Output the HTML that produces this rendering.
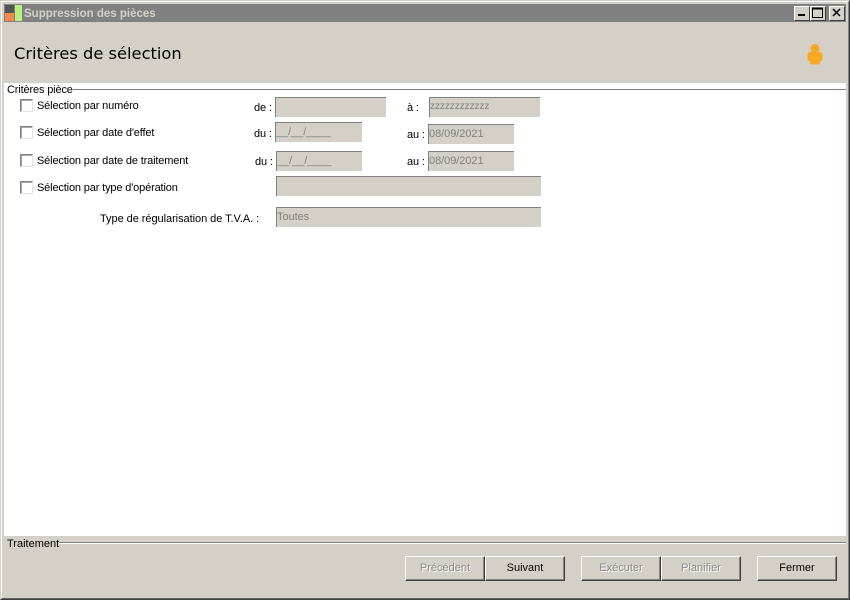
<!DOCTYPE html>
<html lang="fr"><head><meta charset="utf-8"><title>Suppression des pièces</title>
<style>
html,body{margin:0;padding:0}
body{width:850px;height:600px;position:relative;overflow:hidden;background:#d4d0c8;font-family:"Liberation Sans",sans-serif;font-size:11px;color:#000}
div,span.t{position:absolute}
.t{white-space:nowrap;line-height:13px;letter-spacing:-.15px}
.f{background:#d4d0c8;border-top:1px solid #808080;border-left:1px solid #808080;box-sizing:border-box;color:#808080;line-height:14px;white-space:nowrap;padding-top:2px;overflow:hidden;letter-spacing:-.05px}
.c{width:13px;height:13px;box-sizing:border-box;background:#fff;border-top:1px solid #808080;border-left:1px solid #808080;border-right:1px solid #e4e2dc;border-bottom:1px solid #e4e2dc;box-shadow:inset 1px 1px 0 #a8a8a8;left:20px}
.b{height:25px;width:80px;top:556px;box-sizing:border-box;background:#d4d0c8;border-top:1px solid #fff;border-left:1px solid #fff;border-right:1px solid #404040;border-bottom:1px solid #404040;box-shadow:inset -1px -1px 0 #808080;text-align:center;line-height:23px}
.d{color:#8a8a8a;text-shadow:1px 1px 0 #fff}
.w{top:6px;width:14px;height:13px;background:#d4d0c8;border-top:1px solid #fff;border-left:1px solid #fff;border-right:1px solid #404040;border-bottom:1px solid #404040;box-sizing:content-box}
</style></head><body>
<div style="left:0;top:0;width:850px;height:600px;box-sizing:border-box;border-top:1px solid #d4d0c8;border-left:1px solid #d4d0c8;border-right:1px solid #404040;border-bottom:1px solid #404040"></div>
<div style="left:1px;top:1px;width:848px;height:598px;border:1px solid #fff;border-right-color:#808080;border-bottom-color:#606060;box-sizing:border-box"></div>
<div style="left:4px;top:4px;width:842px;height:18px;background:#808080"></div>
<div style="left:5px;top:5px;width:9px;height:16px;background:#555"></div>
<div style="left:5px;top:13px;width:9px;height:8px;background:#f08a50"></div>
<div style="left:15px;top:5px;width:7px;height:16px;background:#b8f080"></div>
<span class="t" style="left:24px;top:8px;font-size:11.500px;font-weight:bold;color:#d4d0c8;letter-spacing:0">Suppression des pièces</span>
<div class="w" style="left:794px"><svg style="position:absolute;left:0;top:0" width="14" height="13"><rect x="3" y="7" width="7" height="2"/></svg></div>
<div class="w" style="left:810px"><svg style="position:absolute;left:0;top:0" width="14" height="13"><path d="M1.500 1.500h10v9h-10z" fill="none" stroke="#000"/><path d="M1 1.500h11" stroke="#000" stroke-width="2"/></svg></div>
<div class="w" style="left:829px"><svg style="position:absolute;left:0;top:0" width="14" height="13"><path d="M3 2l7 7M10 2l-7 7" stroke="#000" stroke-width="1.500" fill="none"/></svg></div>
<span class="t" style="left:14px;top:44px;font-family:'DejaVu Sans',sans-serif;font-size:16.300px;line-height:19px;letter-spacing:0">Critères de sélection</span>
<svg style="position:absolute;left:806px;top:43px" width="18" height="23"><g fill="#f9a825"><circle cx="9" cy="5.500" r="4.500"/><rect x="1.500" y="9" width="15" height="9.500" rx="3"/><rect x="4" y="12" width="10" height="9.500" rx="1"/></g></svg>
<div style="left:4px;top:83px;width:842px;height:453px;background:#fff"></div>
<div style="left:72px;top:89px;width:774px;height:1px;background:#808080"></div>
<span class="t" style="left:7px;top:84px;background:#fff">Critères pièce</span>
<div class="c" style="top:99px"></div><span class="t" style="left:37px;top:100px">Sélection par numéro</span>
<div class="c" style="top:126px"></div><span class="t" style="left:37px;top:127px">Sélection par date d'effet</span>
<div class="c" style="top:154px"></div><span class="t" style="left:37px;top:155px">Sélection par date de traitement</span>
<div class="c" style="top:181px"></div><span class="t" style="left:37px;top:182px">Sélection par type d'opération</span>
<span class="t" style="left:100px;top:213px;letter-spacing:-.05px">Type de régularisation de T.V.A. :</span>
<span class="t" style="left:254px;top:102px">de :</span>
<span class="t" style="left:254px;top:128px">du :</span>
<span class="t" style="left:255px;top:156px">du :</span>
<span class="t" style="left:407px;top:102px">à :</span>
<span class="t" style="left:407px;top:129px">au :</span>
<span class="t" style="left:407px;top:156px">au :</span>
<div class="f" style="left:275px;top:97px;width:111px;height:20px"></div>
<div class="f" style="left:429px;top:97px;width:111px;height:20px;font-size:10px">zzzzzzzzzzzz</div>
<div class="f" style="left:275px;top:122px;width:87px;height:20px">__/__/____</div>
<div class="f" style="left:428px;top:124px;width:86px;height:20px">08/09/2021</div>
<div class="f" style="left:276px;top:151px;width:86px;height:20px">__/__/____</div>
<div class="f" style="left:428px;top:151px;width:86px;height:20px">08/09/2021</div>
<div class="f" style="left:276px;top:176px;width:265px;height:20px"></div>
<div class="f" style="left:276px;top:207px;width:265px;height:20px">Toutes</div>
<div style="left:59px;top:542px;width:787px;height:1px;background:#808080;border-bottom:1px solid #fff"></div>
<span class="t" style="left:7px;top:538px;background:#d4d0c8;letter-spacing:0">Traitement</span>
<div class="b d" style="left:405px">Précédent</div>
<div class="b" style="left:485px">Suivant</div>
<div class="b d" style="left:581px">Exécuter</div>
<div class="b d" style="left:661px">Planifier</div>
<div class="b" style="left:757px">Fermer</div>
</body></html>
